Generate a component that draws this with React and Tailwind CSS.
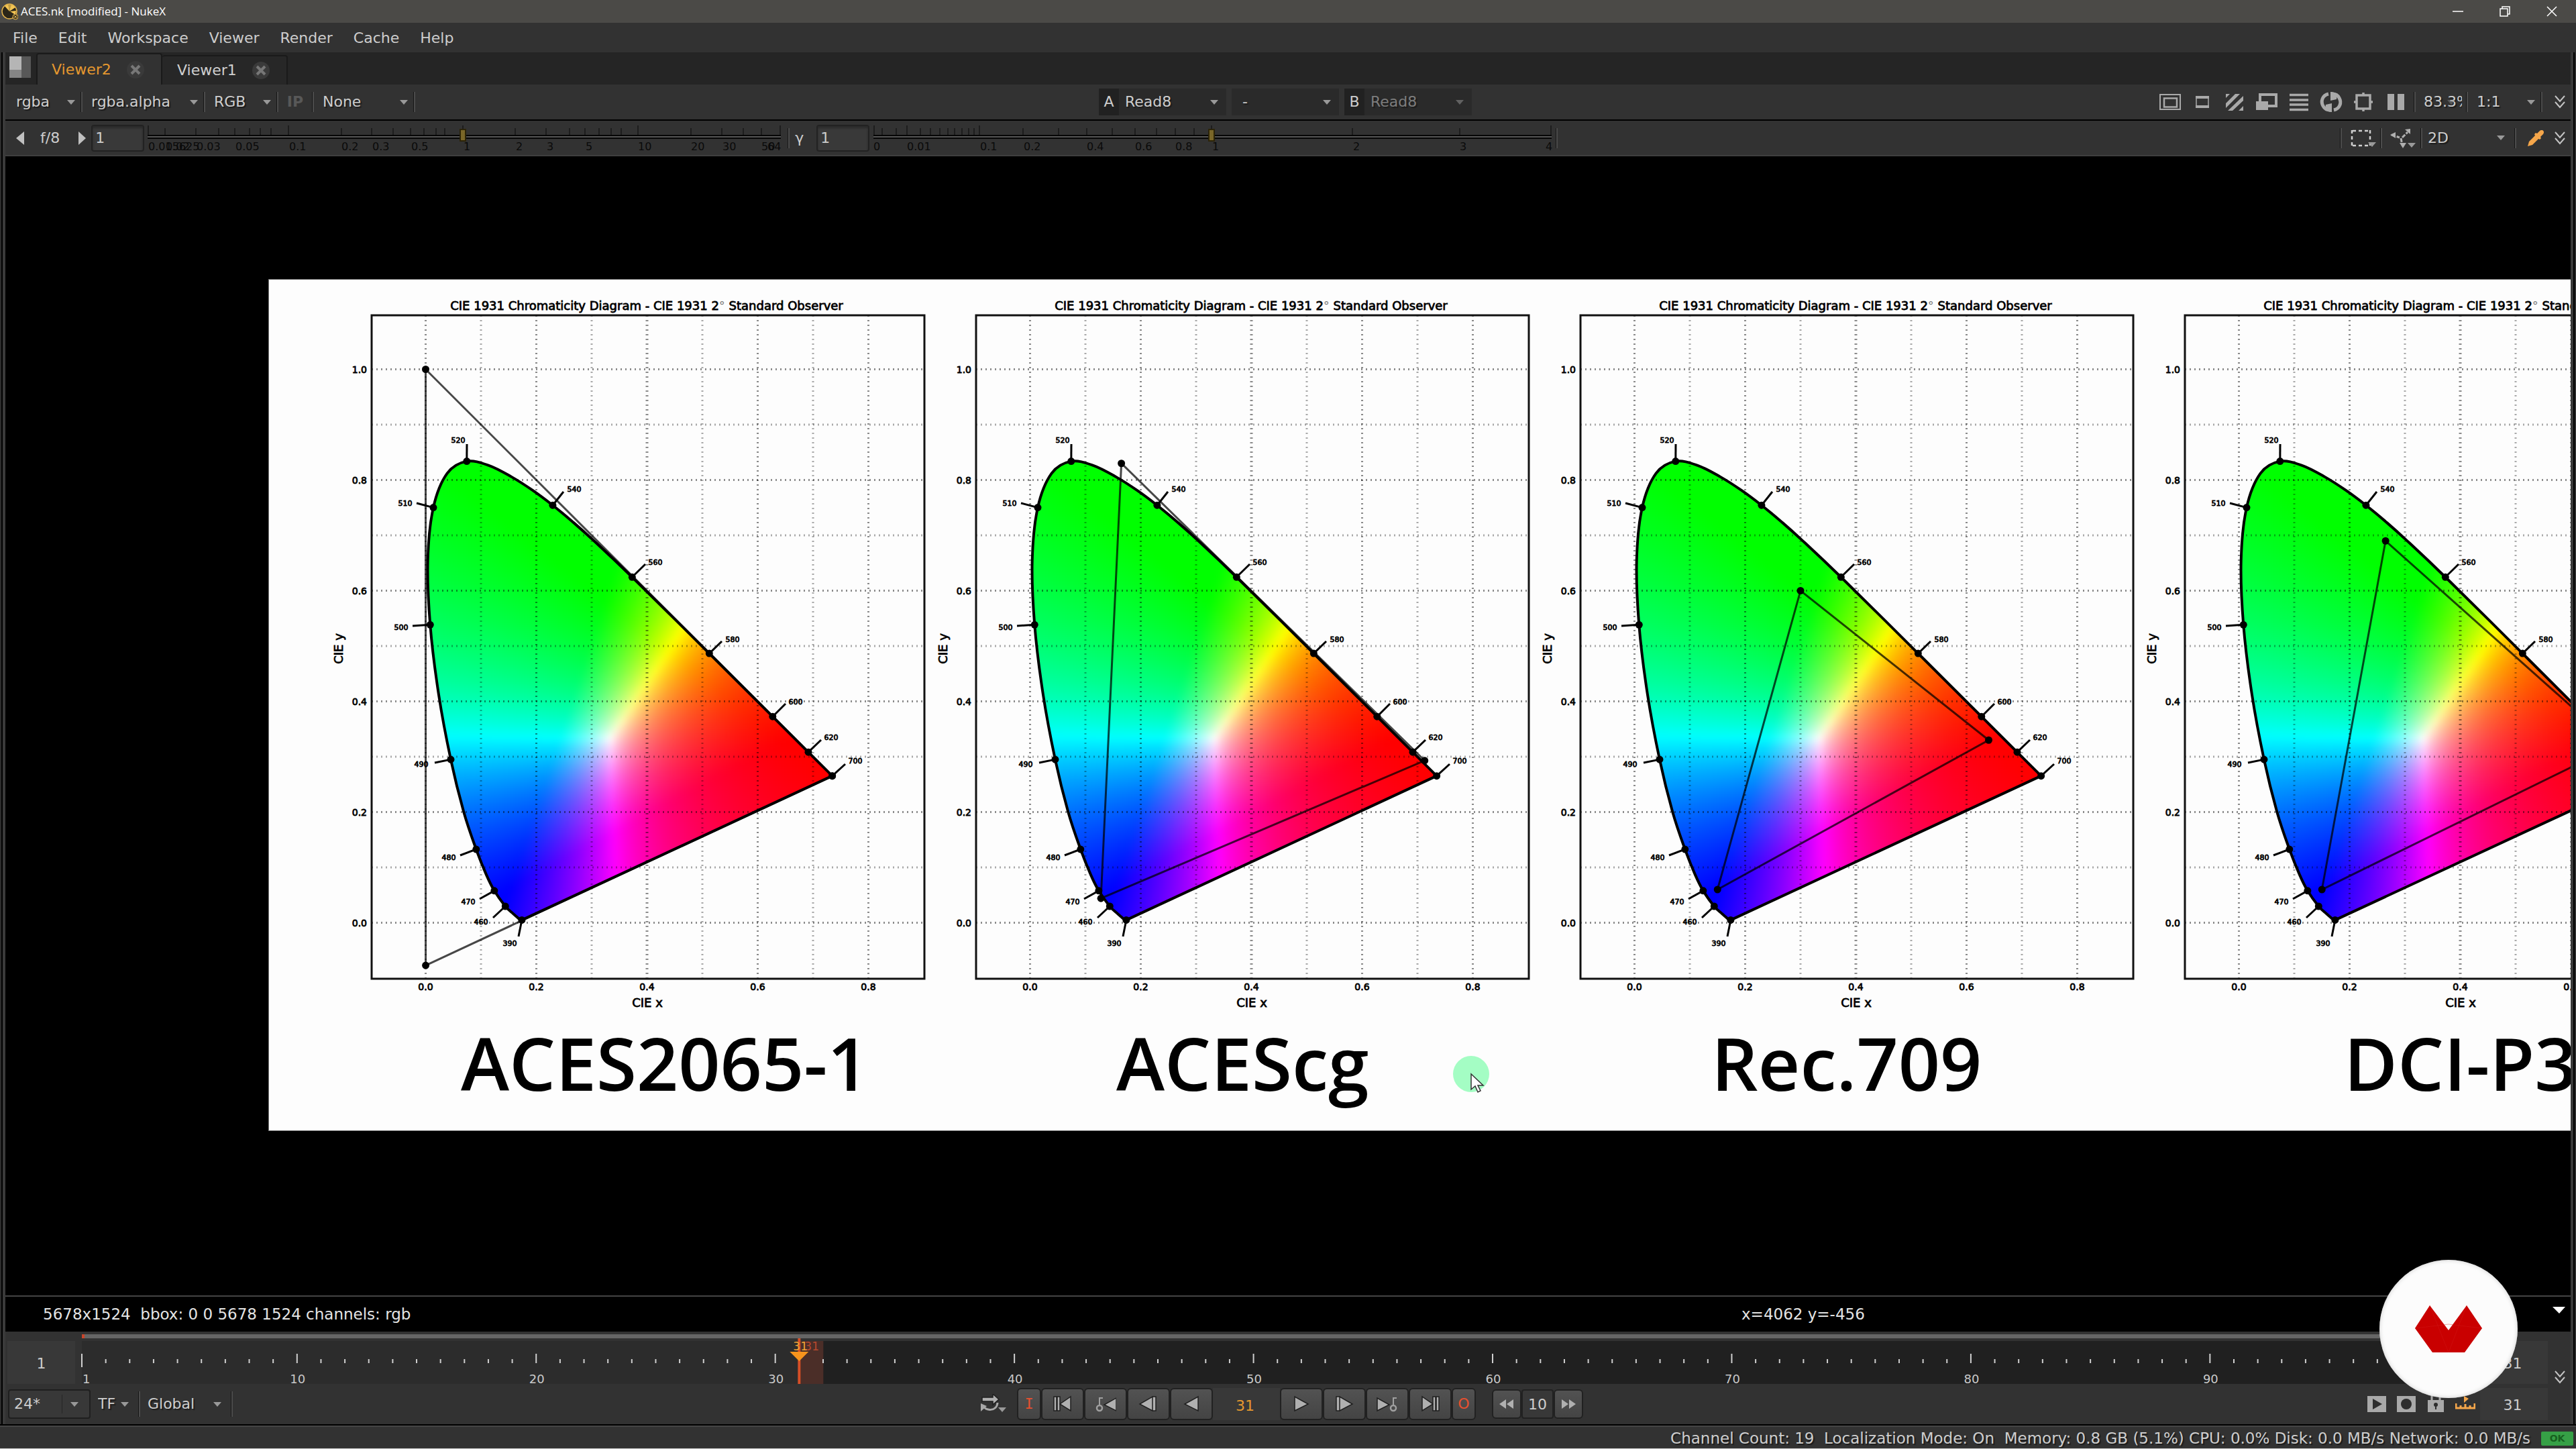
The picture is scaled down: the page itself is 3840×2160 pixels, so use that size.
import { useState } from "react";

// ---------- chromaticity data ----------

const LOCUS = [
  [0.1741, 0.005], [0.1714, 0.0051], [0.1689, 0.0069], [0.1644, 0.0109], [0.1566, 0.0177],
  [0.144, 0.0297], [0.1241, 0.0578], [0.1096, 0.0868], [0.0913, 0.1327], [0.0687, 0.2007],
  [0.0454, 0.295], [0.0235, 0.4127], [0.0082, 0.5384], [0.0039, 0.6548], [0.0139, 0.7502],
  [0.0389, 0.812], [0.0743, 0.8338], [0.1142, 0.8262], [0.1547, 0.8059], [0.1929, 0.7816],
  [0.2296, 0.7543], [0.2658, 0.7243], [0.3016, 0.6923], [0.3731, 0.6245], [0.5125, 0.4866],
  [0.627, 0.3725], [0.6915, 0.3083], [0.7347, 0.2653],
];

// wavelength, x, y, tick end, label centre
const WAVES = [
  [390, 0.1738, 0.0049, 372, 979, 359, 989],
  [460, 0.144, 0.0297, 334, 951, 316, 957],
  [470, 0.1241, 0.0578, 314, 923, 297, 927],
  [480, 0.0913, 0.1327, 285, 858, 268, 861],
  [490, 0.0454, 0.295, 247, 720, 227, 722],
  [500, 0.0082, 0.5384, 214, 516, 197, 518],
  [510, 0.0139, 0.7502, 220, 333, 203, 333],
  [520, 0.0743, 0.8338, 295, 245, 282, 239],
  [540, 0.2296, 0.7543, 439, 316, 455, 312],
  [560, 0.3731, 0.6245, 561, 424, 576, 421],
  [580, 0.5125, 0.4866, 675, 539, 691, 536],
  [600, 0.627, 0.3725, 770, 632, 785, 629],
  [620, 0.6915, 0.3083, 823, 686, 838, 682],
  [700, 0.7347, 0.2653, 859, 722, 874, 717],
];

const SPACES = [
  { name: "ACES2065-1", caption: "pl-[286px]", points: [[0.7347, 0.2653], [0, 1], [0.0001, -0.077]] },
  { name: "ACEScg", caption: "pl-[362px]", points: [[0.713, 0.293], [0.165, 0.83], [0.128, 0.044]] },
  { name: "Rec.709", caption: "pl-[348px]", points: [[0.64, 0.33], [0.3, 0.6], [0.15, 0.06]] },
  { name: "DCI-P3", caption: "pl-[390px]", points: [[0.68, 0.32], [0.265, 0.69], [0.15, 0.06]] },
];

const px = (v) => 233.5 + v * 825;
const py = (v) => 958.5 - v * 825;

function locusPath() {
  const p = LOCUS.map(([x, y]) => [px(x), py(y)]);
  let d = `M${p[0][0]} ${p[0][1]}`;
  for (let i = 0; i < p.length - 1; i++) {
    const a = p[i - 1] || p[i];
    const b = p[i];
    const c = p[i + 1];
    const e = p[i + 2] || c;
    d += `C${b[0] + (c[0] - a[0]) / 6} ${b[1] + (c[1] - a[1]) / 6} ${c[0] - (e[0] - b[0]) / 6} ${c[1] - (e[1] - b[1]) / 6} ${c[0]} ${c[1]}`;
  }
  return d + "Z";
}

const LOCUS_PATH = locusPath();

// xy -> linear sRGB, equal energy white, brightest channel at full
function xyToRgb(x, yy) {
  const y = Math.max(yy, 0.002);
  const X0 = x / y;
  const Z0 = (1 - x - y) / y;
  const X = 0.9531874 * X0 - 0.0265906 + 0.0238731 * Z0;
  const Y = -0.0382467 * X0 + 1.0288406 + 0.009406 * Z0;
  const Z = 0.0026068 * X0 - 0.0030332 + 1.0892565 * Z0;
  const lin = [
    3.2404542 * X - 1.5371385 * Y - 0.4985314 * Z,
    -0.969266 * X + 1.8760108 * Y + 0.041556 * Z,
    0.0556434 * X - 0.2040259 * Y + 1.0572252 * Z,
  ];
  const max = Math.max(...lin);
  return lin.map((c) => Math.round(Math.max(0, c / max) * 255));
}

const CELLS = [];
for (let i = -3; i < 77; i++) {
  for (let j = -3; j < 87; j++) {
    const x = i / 100 + 0.005;
    const y = j / 100 + 0.005;
    if (x + y > 1.04 || y < (x - 0.17) * 0.464 - 0.04) continue;
    const [r, g, b] = xyToRgb(x, y);
    CELLS.push({ x: px(i / 100), y: py((j + 1) / 100), fill: `rgb(${r},${g},${b})` });
  }
}

function LocusDefs() {
  return (
    <svg className="absolute h-0 w-0" aria-hidden="true">
      <defs>
        <filter id="smooth" x="-5%" y="-5%" width="110%" height="110%" colorInterpolationFilters="sRGB">
          <feGaussianBlur stdDeviation="5" />
        </filter>
        <clipPath id="locus-clip">
          <path d={LOCUS_PATH} />
        </clipPath>
        <g id="locus-fill" clipPath="url(#locus-clip)">
          <g filter="url(#smooth)">
            {CELLS.map((c, i) => (
              <rect key={i} x={c.x} y={c.y} width="9" height="9" fill={c.fill} />
            ))}
          </g>
        </g>
      </defs>
    </svg>
  );
}

const TENTHS = [0, 0.1, 0.2, 0.3, 0.4, 0.5, 0.6, 0.7, 0.8];

function Diagram({ points }) {
  return (
    <svg
      width="901"
      height="1092"
      className="overflow-visible font-['DejaVu_Sans',sans-serif]"
      role="img"
      aria-label="Chromaticity diagram"
    >
      <text x="563" y="45" fontSize="18" textAnchor="middle" stroke="#000" strokeWidth="0.8">
        CIE 1931 Chromaticity Diagram - CIE 1931 2<tspan fill="#777" stroke="none">°</tspan> Standard Observer
      </text>
      <use href="#locus-fill" />
      <g stroke="#000" strokeDasharray="2 5">
        {TENTHS.map((v, i) => (
          <line key={v} x1={px(v)} x2={px(v)} y1="53" y2="1042" strokeWidth={v === 0.4 ? 4 : 3} strokeOpacity={i % 2 ? 0.33 : 0.45} />
        ))}
        {[...TENTHS, 0.9, 1].map((v, i) => (
          <line key={v} x1="153" x2="977" y1={py(v)} y2={py(v)} strokeWidth="3" strokeOpacity={i % 2 ? 0.33 : 0.45} />
        ))}
      </g>
      <path d={LOCUS_PATH} fill="none" stroke="#000" strokeWidth="4" strokeLinejoin="round" />
      {WAVES.map(([nm, x, y, tx, ty, lx, ly]) => (
        <g key={nm}>
          <line x1={px(x)} y1={py(y)} x2={tx} y2={ty} stroke="#000" strokeWidth="3" />
          <circle cx={px(x)} cy={py(y)} r="5.500" />
          <text x={lx} y={ly + 4} fontSize="11" textAnchor="middle" stroke="#000" strokeWidth="0.8">
            {nm}
          </text>
        </g>
      ))}
      <polygon
        points={points.map(([x, y]) => `${px(x)},${py(y)}`).join(" ")}
        fill="none"
        stroke="#000"
        strokeOpacity="0.72"
        strokeWidth="3"
      />
      {points.map(([x, y]) => (
        <circle key={x} cx={px(x)} cy={py(y)} r="5.500" />
      ))}
      <rect x="153" y="53" width="824" height="989" fill="none" stroke="#111" strokeWidth="3" />
      <g fontSize="14" stroke="#000" strokeWidth="0.8">
        {[0, 0.2, 0.4, 0.6, 0.8].map((v) => (
          <text key={v} x={px(v)} y="1059" textAnchor="middle">{v.toFixed(1)}</text>
        ))}
        {[0, 0.2, 0.4, 0.6, 0.8, 1].map((v) => (
          <text key={v} x="146" y={py(v) + 5} textAnchor="end">{v.toFixed(1)}</text>
        ))}
      </g>
      <g fontSize="18" textAnchor="middle" stroke="#000" strokeWidth="0.8">
        <text x="564" y="1084">CIE x</text>
        <text x="110" y="550" transform="rotate(-90 110 550)">CIE y</text>
      </g>
    </svg>
  );
}

// ---------- small controls ----------

function Arrow({ className = "" }) {
  return (
    <svg viewBox="0 0 12 7" className={`h-[7px] w-3 fill-[#999] ${className}`} aria-hidden="true">
      <path d="M0 0h12L6 7z" />
    </svg>
  );
}

function Sep({ className = "h-[30px]" }) {
  return <div className={`w-[3px] shrink-0 border-l border-[#161616] bg-[#4b4b4b] ${className}`} />;
}

function Pick({ label, value, className = "w-28 pl-4", arrow = "right-2", muted = false }) {
  return (
    <div className={`relative flex shrink-0 items-center ${className}`}>
      <select
        aria-label={label}
        defaultValue={value}
        className={`w-full min-w-0 appearance-none overflow-hidden bg-transparent outline-none ${muted ? "text-[#7d7d7d]" : ""} [text-shadow:2px_2px_1px_#1c1c1c]`}
      >
        <option>{value}</option>
      </select>
      <Arrow className={`pointer-events-none absolute ${arrow} ${muted ? "opacity-50" : ""}`} />
    </div>
  );
}

function Chevrons() {
  return (
    <button aria-label="More" className="flex w-8 justify-center">
      <svg viewBox="0 0 16 20" className="h-5 w-4" fill="none" stroke="#c4c4c4" strokeWidth="2">
        <path d="M1 1l7 8 7-8M1 10l7 8 7-8" />
      </svg>
    </button>
  );
}

function NumberBox({ label }) {
  return (
    <input
      aria-label={label}
      defaultValue="1"
      className="h-10 w-[79px] rounded-sm border-2 border-[#222] bg-[#393939] px-1 outline-none shadow-[inset_0_3px_3px_#2a2a2a]"
    />
  );
}

function Ruler({ label, width, value, majors, minors, labels, className }) {
  return (
    <div className={`relative h-[52px] shrink-0 ${className}`}>
      <svg width={width} height="52" className="overflow-visible" aria-hidden="true">
        <g stroke="#1d1d1d" strokeWidth="2">
          {majors.map((x) => <line key={x} x1={x} x2={x} y1="7" y2="21" />)}
          {minors.map((x) => <line key={x} x1={x} x2={x} y1="11" y2="21" />)}
        </g>
        <rect y="21" width={width} height="6" fill="#050505" />
        <rect y="23" width={width} height="2" fill="#565656" />
        <g fontSize="16" fill="#0a0a0a">
          {labels.map(([x, t]) => <text key={x} x={x} y="44">{t}</text>)}
        </g>
      </svg>
      <input
        type="range"
        aria-label={label}
        min="0"
        max={width}
        defaultValue={value}
        className="absolute left-0 top-[12px] h-[19px] w-full appearance-none bg-transparent [&::-webkit-slider-thumb]:h-[19px] [&::-webkit-slider-thumb]:w-2.5 [&::-webkit-slider-thumb]:appearance-none [&::-webkit-slider-thumb]:border-2 [&::-webkit-slider-thumb]:border-[#2c2408] [&::-webkit-slider-thumb]:bg-[#7a6728]"
      />
    </div>
  );
}

function ToolButton({ label, size, children }) {
  return (
    <button aria-label={label} className="flex w-12 shrink-0 items-center justify-center">
      <svg width={size[0]} height={size[1]} viewBox={`0 0 ${size[0]} ${size[1]}`} fill="none" stroke="#a9a9a9" className="overflow-visible">
        {children}
      </svg>
    </button>
  );
}

function ViewTools() {
  return (
    <>
      <ToolButton label="Format" size={[32, 24]}>
        <path d="M1 1h30v22H1z" strokeWidth="2" />
        <path d="M7 6.500h19v13H7z" strokeWidth="2.500" />
      </ToolButton>
      <ToolButton label="Region" size={[20, 18]}>
        <path d="M1 1v16h18V1z" strokeWidth="1.500" />
        <path d="M0 2h20M0 16h20" strokeWidth="4" />
      </ToolButton>
      <ToolButton label="Overlay" size={[26, 25]}>
        <path d="M0 0h6L0 6zM14 0h7L0 21v-7zM26 3v7L10 25H3zM26 18v7h-7z" fill="#a9a9a9" stroke="none" />
      </ToolButton>
      <ToolButton label="Proxy" size={[32, 26]}>
        <path d="M6 13V2h24v17H18" strokeWidth="4" />
        <path d="M0 12h18v13H0z" fill="#a9a9a9" stroke="none" />
      </ToolButton>
      <ToolButton label="Scanlines" size={[28, 25]}>
        <path d="M0 1.500h28M0 9h28M0 16h28M0 23.500h28" strokeWidth="3.500" />
      </ToolButton>
      <ToolButton label="Refresh" size={[32, 32]}>
        <path d="M12 4C3 6 0 15 4 22c2 4 5 6 10 6M20 28c9-2 12-11 8-18-2-4-5-6-10-6" strokeWidth="5" />
        <path d="M8 20l9-2v13c-5 0-8-2-10-5zM24 12l-9 2V1c5 0 8 2 10 5z" fill="#a9a9a9" stroke="none" />
      </ToolButton>
      <ToolButton label="Crop" size={[28, 28]}>
        <path d="M4 4h20v20H4zM14 0v4M14 24v4M0 14h4M24 14h4" strokeWidth="3.500" />
      </ToolButton>
      <ToolButton label="Pause" size={[25, 24]}>
        <path d="M0 0h10v24H0zM15 0h10v24H15z" fill="#a9a9a9" stroke="none" />
      </ToolButton>
    </>
  );
}

function NukeLogo() {
  return (
    <svg viewBox="0 0 25 25" className="size-[25px]" aria-hidden="true">
      <circle cx="12" cy="12" r="11" fill="#2b2618" stroke="#e4b44c" strokeWidth="1.500" />
      <path d="M12 12L5 4a11 11 0 0 1 5-2zM12 12l9-6a11 11 0 0 0-6-4zM13 12l9-1-1 6z" fill="#f3c453" />
      <path d="M5 4a11 11 0 0 1 14 0l-6 7z" fill="#f3c453" opacity=".75" />
      <circle cx="21" cy="20" r="4" fill="#3a3323" stroke="#e4b44c" />
      <path d="M19 18l4 4M23 18l-4 4" stroke="#e4b44c" />
    </svg>
  );
}

function CloseMark({ className }) {
  return (
    <svg viewBox="0 0 28 28" className={`size-7 ${className}`} aria-hidden="true">
      <circle cx="14" cy="14" r="13" fill="#3a3a3a" />
      <path d="M8 8l12 12M20 8L8 20" stroke="#777" strokeWidth="4" />
    </svg>
  );
}

const TABS = ["Viewer2", "Viewer1"];

function TabBar() {
  const [active, setActive] = useState("Viewer2");
  return (
    <div className="flex h-12 items-end bg-[#252525]">
      <svg viewBox="0 0 32 32" className="mb-2.5 ml-1.5 mr-2 size-8" aria-hidden="true">
        <path d="M0 0h18v20H0z" fill="#b5b5b5" />
        <path d="M0 20h18v12H0z" fill="#858585" />
        <path d="M18 0h14v32H18z" fill="#585858" />
      </svg>
      {TABS.map((t) => {
        const on = t === active;
        return (
          <button
            key={t}
            onClick={() => setActive(t)}
            className={
              on
                ? "flex h-[47px] w-[188px] items-center rounded-t border-2 border-b-0 border-[#1a1a1a] bg-[#323232] pl-[21px] text-[#e5982f]"
                : "flex h-11 w-[187px] items-center rounded-t border-2 border-b-0 border-l-0 border-[#1a1a1a] bg-[#272727] pl-[22px] text-[#cfcfcf]"
            }
          >
            {t}
            <CloseMark className="ml-[22px]" />
          </button>
        );
      })}
    </div>
  );
}

// ---------- playback ----------

const G = "fill-[#b0b0b0] stroke-[#1f1f1f] [stroke-width:1.5px]";

function PlayButton({ label, children }) {
  return (
    <button
      aria-label={label}
      className="flex h-12 w-16 items-center justify-center rounded-md border-2 border-[#212121] bg-linear-to-b from-[#525252] to-[#444]"
    >
      <svg width="32" height="26" viewBox="0 0 32 26" className={G}>{children}</svg>
    </button>
  );
}

function SideButton({ label, children, className }) {
  return (
    <button
      aria-label={label}
      className={`flex items-center justify-center rounded-md border-2 border-[#212121] bg-linear-to-b from-[#525252] to-[#444] ${className}`}
    >
      {children}
    </button>
  );
}

function Playback() {
  return (
    <div className="mr-5 flex items-center">
      <button aria-label="Loop" className="mr-4 flex w-10 justify-end">
        <svg width="39" height="30" viewBox="0 0 39 30">
          <path d="M3 5h16V0l9 8-9 8v-5H3z" className={G} />
          <path d="M5 18c2 7 20 9 21-5" fill="none" stroke="#a8a8a8" strokeWidth="3" />
          <path d="M1 26V14l9 4z" fill="#a8a8a8" />
          <path d="M27 20h12l-6 7z" fill="#999" />
        </svg>
      </button>
      <SideButton label="Set in point" className="h-12 w-9 font-['DejaVu_Sans_Mono',monospace] text-[#e5502f]">I</SideButton>
      <PlayButton label="First frame">
        <path d="M3 2h4v21H3zM8 2h4v21H8zM28 2v21l-16-10z" />
      </PlayButton>
      <PlayButton label="Previous key">
        <path d="M32 4v19L14 14z" />
        <path d="M7 4h5M7 3v12" className="stroke-[#a0a0a0] [stroke-width:2px]" />
        <circle cx="7" cy="19" r="4" className="fill-none stroke-[#a0a0a0] [stroke-width:2.500px]" />
      </PlayButton>
      <PlayButton label="Step back">
        <path d="M22 2v21L3 13zM22 2h5v21h-5z" />
      </PlayButton>
      <PlayButton label="Play backward">
        <path d="M26 2v21L6 13z" />
      </PlayButton>
      <input
        aria-label="Current frame"
        defaultValue="31"
        className="h-12 w-[100px] bg-[#383838] pb-0 pr-1 pt-1 text-center text-[#e5982f] outline-none"
      />
      <PlayButton label="Play forward">
        <path d="M6 2v21l20-10z" />
      </PlayButton>
      <PlayButton label="Step forward">
        <path d="M9 2v21l19-10zM4 2h5v21H4z" />
      </PlayButton>
      <PlayButton label="Next key">
        <path d="M1 4v19l18-9z" />
        <path d="M25 4h5M25 3v12" className="stroke-[#a0a0a0] [stroke-width:2px]" />
        <circle cx="25" cy="19" r="4" className="fill-none stroke-[#a0a0a0] [stroke-width:2.500px]" />
      </PlayButton>
      <PlayButton label="Last frame">
        <path d="M4 2v21l16-10zM20 2h4v21h-4zM25 2h4v21h-4z" />
      </PlayButton>
      <SideButton label="Set out point" className="mr-6 h-12 w-9 text-[#e5502f]">O</SideButton>
      <SideButton label="Skip back" className="h-11 w-11">
        <svg width="24" height="14" viewBox="0 0 24 14" fill="#b0b0b0"><path d="M11 0v14L1 7zM22 0v14L12 7z" /></svg>
      </SideButton>
      <input
        aria-label="Skip increment"
        defaultValue="10"
        className="h-11 w-12 rounded border-2 border-[#212121] bg-[#383838] text-center outline-none"
      />
      <SideButton label="Skip forward" className="h-11 w-11">
        <svg width="24" height="14" viewBox="0 0 24 14" fill="#b0b0b0"><path d="M2 0v14l10-7zM13 0v14l10-7z" /></svg>
      </SideButton>
    </div>
  );
}

const FRAMES = Array.from({ length: 100 }, (_, i) => i + 1);
const at = (f) => `${((f - 1) / 100.1) * 100}%`;

function FrameRuler() {
  return (
    <div className="flex flex-1 flex-col pt-1">
      <div className="relative mb-1 h-1.5 bg-[#656565]">
        <div className="h-1.5 w-1 bg-[#c8452b]" />
      </div>
      <svg className="h-16 w-full overflow-visible" role="img" aria-label="Timeline">
        <rect width="100%" height="64" fill="#202020" />
        <rect width={at(32)} height="64" fill="#2c2c2c" />
        <rect x={at(31)} width="36" height="64" fill="#4b2e28" />
        {FRAMES.map((f) => {
          const major = f === 1 || f % 10 === 0;
          return (
            <line
              key={f}
              x1={at(f)}
              x2={at(f)}
              y1={major ? 19 : 27}
              y2={f === 1 ? 39 : 33}
              stroke="#d0d0d0"
              strokeWidth="2"
            />
          );
        })}
        {FRAMES.filter((f) => f % 10 === 0).map((f) => (
          <text key={f} x={at(f)} y="63" dx="1" fontSize="18" textAnchor="middle" fill="#c9c9c9">{f}</text>
        ))}
        <text x="1" y="63" fontSize="18" fill="#c9c9c9">1</text>
        <svg x={at(31)} overflow="visible">
          <path d="M0-10v74" stroke="#d64f27" strokeWidth="4" />
          <path d="M-14 16h28L0 30z" fill="#f7941d" />
          <text x="8" y="14" fontSize="17" fill="#b5482e">31</text>
          <text x="-9" y="14" fontSize="17" fill="#f0a535">31</text>
        </svg>
      </svg>
    </div>
  );
}

export default function App() {
  return (
    <div className="relative flex min-h-screen flex-col overflow-hidden bg-[#323232] font-['DejaVu_Sans',sans-serif] text-[22px] leading-7 text-[#cdcdcd]">
      <LocusDefs />

      <header className="flex h-[34px] items-center bg-[#4b4a47] pl-0.5 text-white">
        <NukeLogo />
        <h1 className="ml-1 flex-1 font-['Open_Sans',sans-serif] text-[17px]">ACES.nk [modified] - NukeX</h1>
        <div className="mr-7 flex items-center gap-[54px]">
          <button aria-label="Minimize">
            <svg width="16" height="16" stroke="#fff" strokeWidth="1.500"><path d="M0 8h16" /></svg>
          </button>
          <button aria-label="Restore">
            <svg width="16" height="16" fill="none" stroke="#fff" strokeWidth="1.500"><path d="M1 4h11v11H1zM4 4V1h11v11h-3" /></svg>
          </button>
          <button aria-label="Close">
            <svg width="16" height="16" stroke="#fff" strokeWidth="1.500"><path d="M1 1l14 14M15 1L1 15" /></svg>
          </button>
        </div>
      </header>

      <nav className="flex h-11 items-center gap-[31px] pl-[19px] pt-0.5 [text-shadow:2px_2px_1px_#1c1c1c]">
        {["File", "Edit", "Workspace", "Viewer", "Render", "Cache", "Help"].map((m) => (
          <button key={m}>{m}</button>
        ))}
      </nav>

      <main className="flex flex-1 flex-col border-x-2 border-[#2d2d2d]">
        <div className="flex flex-1 flex-col border-x-2 border-black">
          <div className="flex flex-1 flex-col border-x-4 border-[#3a3a3a]">
            <TabBar />

            <div className="flex h-[52px] items-center">
              <div className="flex flex-1 items-center">
                <Pick label="Layer" value="rgba" className="w-28 pl-4" />
                <Sep />
                <Pick label="Alpha channel" value="rgba.alpha" className="w-[180px] pl-[13px]" />
                <Sep />
                <Pick label="Display channel" value="RGB" className="w-[106px] pl-[13px]" />
                <Sep />
                <button className="w-[50px] font-bold text-[#585858]">IP</button>
                <Sep />
                <Pick label="Viewer process" value="None" className="w-[148px] pl-[13px]" />
                <Sep />
              </div>
              <div className="mr-2 flex h-10 items-center gap-2">
                <div className="flex h-full">
                  <span className="flex w-[30px] items-center justify-center bg-[#212121]">A</span>
                  <Pick label="Input A" value="Read8" className="w-40 bg-[#2a2a2a] pl-[9px]" arrow="right-3" />
                </div>
                <Pick label="Wipe" value="-" className="h-full w-40 bg-[#2a2a2a] pl-4" arrow="right-3" />
                <div className="flex h-full">
                  <span className="flex w-[30px] items-center justify-center bg-[#212121]">B</span>
                  <Pick label="Input B" value="Read8" className="w-40 bg-[#2a2a2a] pl-[9px]" arrow="right-3" muted />
                </div>
              </div>
              <div className="flex flex-1 items-center justify-end">
                <ViewTools />
                <div className="w-[3px]" />
                <Sep />
                <Pick label="Zoom" value="83.3%" className="w-[75px] pl-3 pr-1.5" arrow="right-4 opacity-40" />
                <Sep />
                <Pick label="Pixel ratio" value="1:1" className="w-[108px] pl-[13px]" />
                <Sep />
                <div className="w-2.5" />
                <Chevrons />
              </div>
            </div>

            <div className="flex h-[55px] items-center border-b-2 border-t-2 border-b-[#3f3f3f] border-t-black">
              <div className="flex flex-1 items-center">
                <button aria-label="Lower exposure" className="ml-4 mr-6">
                  <svg width="12" height="20" fill="#c0c0c0"><path d="M12 0v20L0 10z" /></svg>
                </button>
                <span>f/8</span>
                <button aria-label="Raise exposure" className="ml-7 mr-2">
                  <svg width="11" height="20" fill="#c0c0c0"><path d="M0 0v20l11-10z" /></svg>
                </button>
                <NumberBox label="Gain" />
                <Ruler
                  label="Gain slider"
                  className="ml-[5px] w-[944px]"
                  width={944}
                  value={470}
                  majors={[1, 210, 470, 731, 943]}
                  minors={[26, 72, 106, 130, 152, 168, 184, 289, 334, 366, 392, 412, 430, 443, 548, 594, 629, 652, 673, 691, 706, 810, 856, 888, 915]}
                  labels={[
                    [1, "0.015625"], [27, "0.02"], [73, "0.03"], [131, "0.05"], [211, "0.1"], [289, "0.2"], [335, "0.3"],
                    [393, "0.5"], [471, "1"], [549, "2"], [595, "3"], [653, "5"], [731, "10"], [810, "20"],
                    [857, "30"], [915, "50"], [924, "64"],
                  ]}
                />
                <div className="w-2.5" />
                <Sep />
                <span className="w-10 pl-2">γ</span>
                <NumberBox label="Gamma" />
                <Ruler
                  label="Gamma slider"
                  className="ml-[6px] w-[1011px]"
                  width={1011}
                  value={504}
                  majors={[1, 50, 158, 504, 1010]}
                  minors={[13, 34, 70, 85, 99, 111, 121, 132, 142, 150, 223, 276, 318, 356, 390, 422, 450, 478, 714, 874]}
                  labels={[
                    [0, "0"], [50, "0.01"], [159, "0.1"], [224, "0.2"], [318, "0.4"], [390, "0.6"], [450, "0.8"],
                    [505, "1"], [715, "2"], [874, "3"], [1002, "4"],
                  ]}
                />
                <div className="w-1.5" />
                <Sep />
              </div>
              <div className="flex items-center">
                <Sep />
                <button aria-label="Region of interest" className="flex w-[57px] justify-center">
                  <svg width="36" height="26" className="overflow-visible">
                    <path d="M5 2h25M5 24h25M4 1v24M31 1v24" stroke="#cfcfcf" strokeWidth="2.500" strokeDasharray="5 4" />
                    <path d="M28 19h12l-6 7z" fill="#999" />
                  </svg>
                </button>
                <Sep />
                <button aria-label="Tracker" className="flex w-[57px] justify-center">
                  <svg width="34" height="28" className="overflow-visible">
                    <path d="M2 9l12 4M18 13l8-8M16 14l2 10" stroke="#b0b0b0" strokeWidth="3" strokeDasharray="6 2" />
                    <path d="M0 9l8-4v9zM30 0v8l-8-7zM14 21h10l-5 8z" fill="#b0b0b0" />
                    <path d="M26 21h12l-6 7z" fill="#999" />
                  </svg>
                </button>
                <Sep />
                <Pick label="View mode" value="2D" className="w-[137px] pl-2" arrow="right-[14px]" />
                <Sep />
                <button aria-label="Colour sampler" className="flex w-[49px] justify-center pl-2">
                  <svg width="24" height="24" fill="#f5a64a"><path d="M0 24l2-7 9-9-1-2 2-2 2 1 4-4c4-3 8 1 5 5l-4 4 1 2-2 2-2-1-9 9z" /></svg>
                </button>
                <Chevrons />
              </div>
            </div>

            <section className="relative flex-1 overflow-hidden bg-black pb-[245px] pl-[392px] pt-[183px]">
              <div className="flex w-[3700px] border border-[#777] bg-[#fdfdfd] pb-[26px] text-black">
                {SPACES.map((s) => (
                  <figure key={s.name} className="w-[901px] shrink-0">
                    <Diagram points={s.points} />
                    <figcaption className={`whitespace-nowrap font-['Open_Sans',sans-serif] text-[109px] font-semibold leading-[150px] ${s.caption}`}>
                      {s.name}
                    </figcaption>
                  </figure>
                ))}
              </div>
              <svg className="absolute left-[2157px] top-[1341px]" width="56" height="56" aria-hidden="true">
                <circle cx="28" cy="27" r="27" fill="#a4fdc4" />
                <path d="M28 27v23l6-5 4 9 4-2-4-8h8z" fill="#fff" stroke="#333" strokeWidth="1.500" />
              </svg>
            </section>

            <div className="flex h-[54px] items-center border-t-2 border-[#444] bg-black text-[#e4e4e4]">
              <p className="flex-1 whitespace-pre pl-14 text-[23px]">5678x1524  bbox: 0 0 5678 1524 channels: rgb</p>
              <div className="flex w-[1236px] items-center justify-between pr-2">
                <span className="text-[23px]">x=4062 y=-456</span>
                <svg width="19" height="10" fill="#fff" className="mb-3"><path d="M0 0h19l-9 10z" /></svg>
              </div>
            </div>

            <div className="flex items-end pl-[3px]">
              <label className="mr-2.5 flex h-16 w-[101px] bg-[#383838]">
                <input aria-label="First frame" defaultValue="1" className="w-full bg-transparent pt-1 text-center outline-none" />
              </label>
              <FrameRuler />
              <label className="ml-[7px] flex h-16 w-[101px] bg-[#383838]">
                <input aria-label="Last frame" defaultValue="31" className="w-full bg-transparent pr-1 pt-1 text-center outline-none" />
              </label>
              <div className="w-0.5" />
              <Chevrons />
            </div>

            <div className="flex h-[60px] items-center">
              <div className="flex flex-1 items-center">
                <div className="relative ml-1 flex h-11 w-[123px] items-center rounded border-2 border-[#1f1f1f] bg-[#383838] pl-[7px]">
                  <select aria-label="Frame rate" defaultValue="24*" className="w-[72px] appearance-none border-r border-[#262626] bg-transparent outline-none">
                    <option>24*</option>
                  </select>
                  <Arrow className="pointer-events-none absolute right-4" />
                </div>
                <Pick label="Time format" value="TF" className="w-[71px] pl-[11px]" arrow="right-3.5" />
                <Sep className="h-[38px]" />
                <Pick label="Range" value="Global" className="w-[135px] pl-[11px]" arrow="right-3.5" />
                <Sep className="h-[38px]" />
              </div>
              <Playback />
              <div className="flex flex-1 items-center justify-end">
                <div className="flex">
                  <button aria-label="Flipbook" className="flex w-11 justify-center">
                    <svg width="28" height="24"><path d="M0 0h28v24H0z" fill="#a9a9a9" /><path d="M8 4l14 8-14 8z" fill="#2d2d2d" /></svg>
                  </button>
                  <button aria-label="Record" className="flex w-11 justify-center">
                    <svg width="28" height="24"><path d="M0 0h28v24H0z" fill="#a9a9a9" /><circle cx="14" cy="12" r="8" fill="#2d2d2d" /></svg>
                  </button>
                  <button aria-label="Lock range" className="flex w-11 justify-center">
                    <svg width="24" height="24" className="overflow-visible">
                      <path d="M0 6h24v18H0z" fill="#a9a9a9" />
                      <path d="M6 7V1a6 6 0 0 1 12 0v6" fill="none" stroke="#a9a9a9" strokeWidth="3" />
                      <circle cx="12" cy="13" r="3" fill="#2d2d2d" />
                      <path d="M12 13v7" stroke="#2d2d2d" strokeWidth="2" />
                    </svg>
                  </button>
                  <button aria-label="Sync range" className="flex w-11 justify-center">
                    <svg width="30" height="24">
                      <path d="M1 11v7h28v-7M8 14v4M15 12v6M22 14v4" fill="none" stroke="#f5a64a" strokeWidth="3" />
                      <path d="M13 0v10l7-6z" fill="#f5a64a" />
                    </svg>
                  </button>
                </div>
                <label className="mr-[34px] flex h-12 w-[101px] bg-[#383838]">
                  <input aria-label="Frame out" defaultValue="31" className="w-full bg-transparent pr-1 pt-1 text-center outline-none" />
                </label>
              </div>
            </div>
          </div>
        </div>
      </main>

      <footer className="flex h-9 items-center justify-end border-t-2 border-black pr-1 shadow-[inset_0_2px_0_#454545]">
        <p className="mr-4 whitespace-pre pt-1 text-[23px] [text-shadow:2px_2px_1px_#1c1c1c]">
          Channel Count: 19  Localization Mode: On  Memory: 0.8 GB (5.1%) CPU: 0.0% Disk: 0.0 MB/s Network: 0.0 MB/s
        </p>
        <button className="mt-1 h-[21px] w-12 rounded-xs bg-[#36a046] text-[14px] font-bold leading-5 text-[#17601f]">OK</button>
      </footer>
      <div className="h-0.5 bg-[#cfcfcf]" />

      <div className="absolute bottom-[77px] right-[87px] flex size-[206px] items-center justify-center rounded-full bg-[#fcfcfc] shadow-[inset_0_0_6px_#ccc]">
        <svg width="100" height="70" aria-label="Logo">
          <path d="M0 34L22 0l28 37L77 0l23 34-26 36H26z" fill="#c90000" />
          <path d="M22 0l28 70M77 0L50 70M0 34l50-6 50 6" stroke="#d41b1b" strokeOpacity=".4" fill="none" />
        </svg>
      </div>
    </div>
  );
}
